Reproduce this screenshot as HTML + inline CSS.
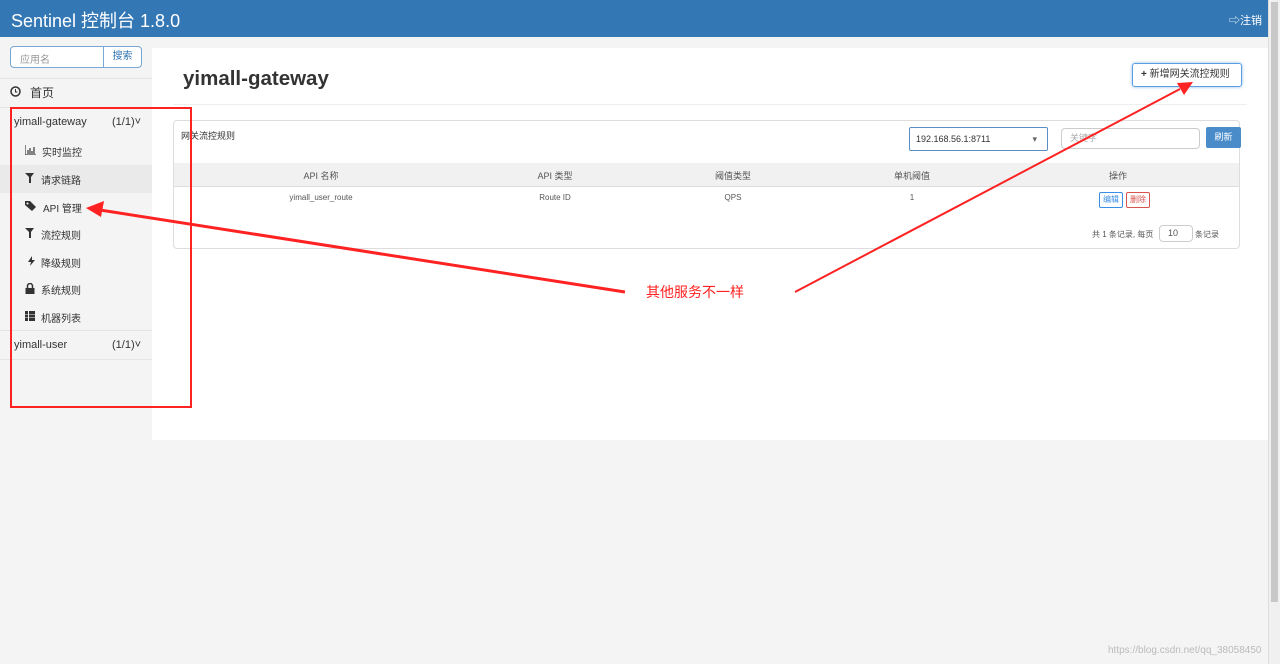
<!DOCTYPE html>
<html><head><meta charset="utf-8"><style>
*{box-sizing:border-box;margin:0;padding:0}
body{width:1280px;height:664px;overflow:hidden;background:#f4f4f4;font-family:"Liberation Sans","Noto Sans CJK SC",sans-serif;color:#333;position:relative}
.hd{position:absolute;left:0;top:0;width:1268px;height:37px;background:#3377b4;color:#fff}
.hd .t{position:absolute;left:11px;top:7px;font-size:18px}
.hd .r{position:absolute;right:6px;top:12px;font-size:11px}
.side{position:absolute;left:0;top:37px;width:152px;height:627px;background:#f4f4f4}
.srch{position:absolute;left:10px;top:9px;width:132px;height:22px;border:1px solid #7aa7d6;border-radius:4px;background:#fff;font-size:10px}
.srch span{position:absolute;left:9px;top:4px;color:#999}
.srch b{position:absolute;right:0;top:0;width:38px;height:20px;border-left:1px solid #7aa7d6;font-weight:normal;color:#3377b4;text-align:center;line-height:20px}
.it{position:absolute;left:0;width:152px;font-size:10px;color:#333}
.ic{position:absolute;left:25px;top:1px}
.sc{position:absolute;right:0;width:12px;top:0;height:664px;background:#f0f0f0;border-left:1px solid #ddd}
.sc div{position:absolute;left:2px;top:2px;width:7px;height:600px;background:#c8c8c8}
.main{position:absolute;left:152px;top:48px;width:1116px;height:392px;background:#fff}
.h1{position:absolute;left:31px;top:19px;font-size:20.5px;font-weight:bold;color:#333}
.add{position:absolute;left:980px;top:15px;width:110px;height:24px;border:1px solid #5b9de0;border-radius:3px;font-size:10px;line-height:22px;padding-left:8px;box-shadow:0 0 3px #8bbcf0}
.hr{position:absolute;left:21px;top:56px;width:1074px;height:1px;background:#eee}
.box{position:absolute;left:21px;top:72px;width:1067px;height:129px;border:1px solid #ddd;border-radius:4px}
.th{position:absolute;left:0;top:42px;width:1065px;height:24px;background:#f1f1f1;border-bottom:1px solid #ddd;font-size:9px;color:#555}
.c{position:absolute;text-align:center;transform:translateX(-50%);white-space:nowrap}
</style></head><body>
<div class="hd"><div class="t">Sentinel 控制台 1.8.0</div><div class="r">⇨注销</div></div>
<div class="side">
<div class="srch"><span>应用名</span><b>搜索</b></div>
<div style="position:absolute;left:0;top:41px;width:152px;height:1px;background:#e4e4e4"></div>
<div class="it" style="top:47px;font-size:12px"><svg style="position:absolute;left:10px;top:2px" width="11" height="11"><circle cx="5.5" cy="5.5" r="4.5" fill="none" stroke="#333" stroke-width="1.5"/><path d="M5.5 3v3h2" stroke="#333" fill="none"/></svg><span style="position:absolute;left:30px">首页</span></div>
<div style="position:absolute;left:0;top:70px;width:152px;height:1px;background:#e4e4e4"></div>
<div class="it" style="top:79px;font-size:11px"><span style="position:absolute;left:14px">yimall-gateway</span><span style="position:absolute;left:112px">(1/1)˅</span></div>
<div class="it" style="top:107px"><svg class="ic" width="11" height="10"><path d="M0 0v10h11M3 9V5M5 9V3M7 9V6M9 9V2" stroke="#444" stroke-width="1.3" fill="none"/></svg><span style="position:absolute;left:42px">实时监控</span></div>
<div style="position:absolute;left:0;top:128px;width:152px;height:28px;background:#eaeaea"></div>
<div class="it" style="top:135px"><svg class="ic" width="10" height="10"><path d="M0 0h9L6 4v6H4V4z" fill="#333"/></svg><span style="position:absolute;left:41px">请求链路</span></div>
<div class="it" style="top:163px"><svg class="ic" width="12" height="11"><path d="M0 0h5l6 6-4 4-7-6z" fill="#333"/><circle cx="2.5" cy="2.5" r="1" fill="#fff"/></svg><span style="position:absolute;left:43px">API 管理</span></div>
<div class="it" style="top:190px"><svg class="ic" width="10" height="10"><path d="M0 0h9L6 4v6H4V4z" fill="#333"/></svg><span style="position:absolute;left:41px">流控规则</span></div>
<div class="it" style="top:218px"><svg class="ic" width="10" height="10" style="left:27px"><path d="M5 0L1 6h3L3 10l5-6H5z" fill="#333"/></svg><span style="position:absolute;left:41px">降级规则</span></div>
<div class="it" style="top:245px"><svg class="ic" width="10" height="11"><path d="M2.5 5V3a2.5 2.5 0 015 0v2" stroke="#333" stroke-width="1.5" fill="none"/><rect x="0.5" y="5" width="9" height="6" fill="#333"/></svg><span style="position:absolute;left:41px">系统规则</span></div>
<div class="it" style="top:273px"><svg class="ic" width="10" height="10"><path d="M0 0h3v3H0zM4 0h6v3H4zM0 3.5h3v3H0zM4 3.5h6v3H4zM0 7h3v3H0zM4 7h6v3H4z" fill="#333"/></svg><span style="position:absolute;left:41px">机器列表</span></div>
<div style="position:absolute;left:0;top:293px;width:152px;height:1px;background:#e4e4e4"></div>
<div class="it" style="top:302px;font-size:11px"><span style="position:absolute;left:14px">yimall-user</span><span style="position:absolute;left:112px">(1/1)˅</span></div>
<div style="position:absolute;left:0;top:322px;width:152px;height:1px;background:#e4e4e4"></div>
</div>
<div class="main">
<div class="h1">yimall-gateway</div>
<div class="add"><b>+</b> 新增网关流控规则</div>
<div class="hr"></div>
<div class="box">
<div style="position:absolute;left:7px;top:8px;font-size:9px">网关流控规则</div>
<div style="position:absolute;left:735px;top:6px;width:139px;height:24px;border:1px solid #5b8ec4;border-radius:2px;font-size:9px;line-height:22px;padding-left:6px">192.168.56.1:8711<span style="position:absolute;right:10px;color:#666">▾</span></div>
<div style="position:absolute;left:887px;top:7px;width:139px;height:21px;border:1px solid #ccc;border-radius:4px;font-size:9px;line-height:19px;padding-left:8px;color:#aaa">关键字</div>
<div style="position:absolute;left:1032px;top:6px;width:35px;height:21px;background:#4a8bc9;border-radius:2px;color:#fff;font-size:9px;text-align:center;line-height:21px">刷新</div>
<div class="th"><span class="c" style="left:147px;top:6px">API 名称</span><span class="c" style="left:381px;top:6px">API 类型</span><span class="c" style="left:559px;top:6px">阈值类型</span><span class="c" style="left:738px;top:6px">单机阈值</span><span class="c" style="left:944px;top:6px">操作</span></div>
<div style="font-size:8px;color:#555">
<span class="c" style="left:147px;top:72px">yimall_user_route</span><span class="c" style="left:381px;top:72px">Route ID</span><span class="c" style="left:559px;top:72px">QPS</span><span class="c" style="left:738px;top:72px">1</span>
<span style="position:absolute;left:925px;top:71px;width:24px;height:16px;border:1px solid #3a8ee6;color:#3a8ee6;text-align:center;line-height:14px;border-radius:2px">编辑</span>
<span style="position:absolute;left:952px;top:71px;width:24px;height:16px;border:1px solid #d9534f;color:#d9534f;text-align:center;line-height:14px;border-radius:2px">删除</span>
<span style="position:absolute;left:918px;top:108px">共 1 条记录, 每页</span>
<span style="position:absolute;left:985px;top:104px;width:34px;height:17px;border:1px solid #ccc;border-radius:4px;padding-left:8px;line-height:15px;font-size:9px">10</span>
<span style="position:absolute;left:1021px;top:108px">条记录</span>
</div></div>
</div>
<div class="sc"><div></div></div>
<div style="position:absolute;left:1108px;top:645px;font-size:10px;color:#bbb">https://blog.csdn.net/qq_38058450</div>
<svg style="position:absolute;left:0;top:0" width="1280" height="664">
<rect x="11" y="108" width="180" height="299" fill="none" stroke="#f22" stroke-width="2"/>
<line x1="625" y1="292" x2="100" y2="210" stroke="#f22" stroke-width="3"/>
<polygon points="86,208 104,201 101,217" fill="#f22"/>
<line x1="795" y1="292" x2="1180" y2="89" stroke="#f22" stroke-width="2"/>
<polygon points="1193,82 1177,83 1184,95" fill="#f22"/>
<text x="646" y="297" fill="#f22" font-size="14" font-family="Liberation Sans,Noto Sans CJK SC,sans-serif">其他服务不一样</text>
</svg>
</body></html>
